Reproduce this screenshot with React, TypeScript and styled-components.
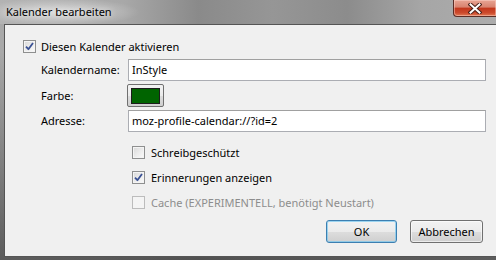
import React from "react";
import styled, { createGlobalStyle } from "styled-components";

const GlobalStyle = createGlobalStyle`
  html, body {
    margin: 0;
    padding: 0;
    width: 496px;
    height: 260px;
    overflow: hidden;
    font-family: "Noto Sans", "Open Sans", sans-serif;
    font-size: 11px;
  }
`;

const Window = styled.div`
  width: 496px;
  height: 260px;
  display: flex;
  flex-direction: column;
  background:
    linear-gradient(to bottom, rgba(0, 0, 0, 0) 0%, rgba(0, 0, 0, 0) 20%, rgba(40, 40, 40, 0.6) 100%),
    linear-gradient(to right, #a9a9a9 0%, #a2a2a2 20%, #8f8f8f 40%, #999 60%, #a4a4a4 80%, #aaa 100%);
  overflow: hidden;
`;

const TitleBar = styled.div`
  position: relative;
  height: 24px;
  flex: none;
  display: flex;
  align-items: center;
  padding-left: 6px;
  background:
    radial-gradient(ellipse 80px 14px at 60px 12px, rgba(255, 255, 255, 0.55), rgba(255, 255, 255, 0) 100%),
    linear-gradient(to right, #b3b3b3 0%, #a8a8a8 25%, #8a8a8a 40%, #969696 55%, #8c8c8c 70%, #a6a6a6 85%, #acacac 100%);
`;

const Title = styled.span`
  font-size: 11px;
  color: #000;
  line-height: 24px;
  margin-top: -1px;
  text-shadow: 0 0 6px rgba(255, 255, 255, 0.9);
`;

const CloseButton = styled.div`
  position: absolute;
  top: 0;
  right: 0;
  width: 42px;
  height: 16px;
  border: 1px solid #5b2d25;
  border-top: none;
  border-right: none;
  border-bottom-left-radius: 4px;
  background: linear-gradient(to bottom, #e8a594 0%, #d8836f 45%, #c2371c 50%, #cc4a2c 80%, #e27a55 100%);
  display: flex;
  align-items: center;
  justify-content: center;
  box-shadow: inset 0 0 0 1px rgba(255, 220, 210, 0.45);
`;

const Client = styled.div`
  flex: 1;
  margin-left: 4px;
  margin-bottom: 3px;
  border: 1px solid #555;
  border-right: none;
  background: #f0f0f0;
  display: flex;
  flex-direction: column;
  color: #000;
`;

const ActivateRow = styled.label`
  display: flex;
  align-items: center;
  gap: 5px;
  height: 14px;
  margin: 14px 0 0 18px;
`;

const FormGrid = styled.div`
  display: grid;
  grid-template-columns: 87px 358px;
  grid-auto-rows: auto;
  row-gap: 3px;
  margin: 6px 0 0 36px;
  align-items: center;
`;

const FieldLabel = styled.span`
  line-height: 14px;
`;

const TextInput = styled.div`
  height: 22px;
  box-sizing: border-box;
  border: 1px solid #abadb3;
  border-top-color: #a0a0a0;
  background: #fff;
  padding-left: 3px;
  line-height: 20px;
`;

const ColorButton = styled.div`
  width: 37px;
  height: 23px;
  margin-left: -1px;
  box-sizing: border-box;
  border: 1px solid #707070;
  border-radius: 2px;
  background: linear-gradient(to bottom, #f2f2f2 0%, #ebebeb 50%, #dddddd 51%, #cfcfcf 100%);
  display: flex;
  align-items: center;
  justify-content: center;
`;

const Swatch = styled.div<{ $color: string }>`
  width: 27px;
  height: 14px;
  background: ${(p) => p.$color};
  border: 1px solid #1c1c1c;
`;

const Options = styled.div`
  display: flex;
  flex-direction: column;
  gap: 11px;
  margin: 13px 0 0 127px;
`;

const OptionRow = styled.label<{ $disabled?: boolean }>`
  display: flex;
  align-items: center;
  gap: 6px;
  height: 14px;
  color: ${(p) => (p.$disabled ? "#8d8d8d" : "#000")};
`;

const BoxWrap = styled.span<{ $disabled?: boolean }>`
  width: 13px;
  height: 13px;
  flex: none;
  box-sizing: border-box;
  border: 1px solid ${(p) => (p.$disabled ? "#bcbcbc" : "#8e8f8f")};
  background: ${(p) =>
    p.$disabled ? "#f4f4f4" : "linear-gradient(135deg, #d8d8d8 0%, #ebebeb 50%, #fbfbfb 100%)"};
  box-shadow: inset 0 0 0 1px ${(p) => (p.$disabled ? "#f4f4f4" : "#f4f4f4")};
  display: flex;
  align-items: center;
  justify-content: center;
`;

const ButtonRow = styled.div`
  display: flex;
  justify-content: flex-end;
  gap: 13px;
  margin-top: 11px;
  padding-right: 13px;
`;

const PushButton = styled.div<{ $default?: boolean; $width: number }>`
  width: ${(p) => p.$width}px;
  height: 23px;
  box-sizing: border-box;
  border: 1px solid ${(p) => (p.$default ? "#3c7fb1" : "#707070")};
  border-radius: 3px;
  background: linear-gradient(to bottom, #f2f2f2 0%, #ebebeb 50%, #dddddd 51%, #cfcfcf 100%);
  box-shadow: inset 0 0 0 1px ${(p) => (p.$default ? "rgba(120, 200, 240, 0.7)" : "rgba(255, 255, 255, 0.6)")};
  display: flex;
  align-items: center;
  justify-content: center;
  line-height: 21px;
`;

const Checkbox = ({ checked, disabled }: { checked?: boolean; disabled?: boolean }) => (
  <BoxWrap $disabled={disabled}>
    {checked && (
      <svg width="9" height="9" viewBox="0 0 9 9">
        <path d="M1 4.6 L3.4 7.2 L8 1" fill="none" stroke="#3a5194" strokeWidth="1.8" strokeLinejoin="round" />
      </svg>
    )}
  </BoxWrap>
);

export default function App() {
  return (
    <>
      <GlobalStyle />
      <Window>
        <TitleBar>
          <Title>Kalender bearbeiten</Title>
          <CloseButton>
            <svg width="14" height="11" viewBox="0 0 14 11">
              <path d="M2.5 1.5 L11.5 9.5 M11.5 1.5 L2.5 9.5" stroke="#4a2018" strokeWidth="4" strokeLinecap="square" />
              <path d="M2.5 1.5 L11.5 9.5 M11.5 1.5 L2.5 9.5" stroke="#fff" strokeWidth="2" strokeLinecap="square" />
            </svg>
          </CloseButton>
        </TitleBar>
        <Client>
          <ActivateRow>
            <Checkbox checked />
            <span>Diesen Kalender aktivieren</span>
          </ActivateRow>
          <FormGrid>
            <FieldLabel>Kalendername:</FieldLabel>
            <TextInput>InStyle</TextInput>
            <FieldLabel>Farbe:</FieldLabel>
            <ColorButton>
              <Swatch $color="#006400" />
            </ColorButton>
            <FieldLabel>Adresse:</FieldLabel>
            <TextInput>moz-profile-calendar://?id=2</TextInput>
          </FormGrid>
          <Options>
            <OptionRow>
              <Checkbox />
              <span>Schreibgeschützt</span>
            </OptionRow>
            <OptionRow>
              <Checkbox checked />
              <span>Erinnerungen anzeigen</span>
            </OptionRow>
            <OptionRow $disabled>
              <Checkbox disabled />
              <span>Cache (EXPERIMENTELL, benötigt Neustart)</span>
            </OptionRow>
          </Options>
          <ButtonRow>
            <PushButton $default $width={71}>OK</PushButton>
            <PushButton $width={73}>Abbrechen</PushButton>
          </ButtonRow>
        </Client>
      </Window>
    </>
  );
}
